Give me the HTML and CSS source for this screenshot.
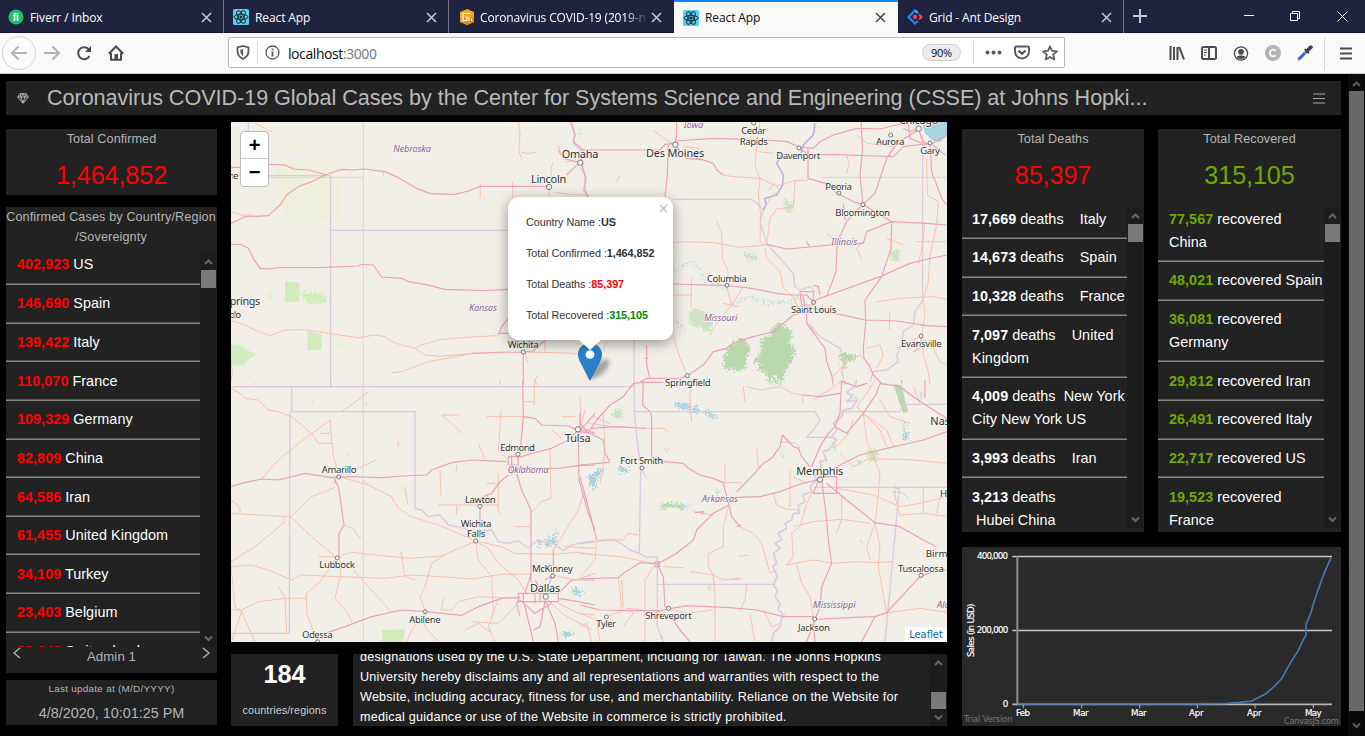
FILE: index.html
```html
<!DOCTYPE html>
<html lang="en">
<head>
<meta charset="utf-8">
<title>React App</title>
<link rel="stylesheet" href="styles.css">
</head>
<body>
<svg class="defs" width="0" height="0">
  <defs>
    <g id="react">
      <rect width="16" height="16" rx="1.5" fill="#53cdf0"/>
      <g fill="none" stroke="#20323c" stroke-width="1">
        <ellipse cx="8" cy="8" rx="7" ry="2.7"/>
        <ellipse cx="8" cy="8" rx="7" ry="2.7" transform="rotate(60 8 8)"/>
        <ellipse cx="8" cy="8" rx="7" ry="2.7" transform="rotate(120 8 8)"/>
      </g>
      <circle cx="8" cy="8" r="1.5" fill="#20323c"/>
    </g>
    <path id="x" d="M1 1L10 10M10 1L1 10" fill="none" stroke-width="1.6"/>
    <path id="up" d="M1 6L4.500 2.500L8 6" fill="none" stroke-width="2"/>
    <path id="down" d="M1 2.500L4.500 6L8 2.500" fill="none" stroke-width="2"/>
  </defs>
</svg>

<header class="tabs">
  <div class="tab first">
    <svg width="16" height="16"><circle cx="8" cy="8" r="7.500" fill="#1dbf73"/><text x="7.800" y="11.600" class="fi">fi</text></svg>
    <span class="tab-name">Fiverr / Inbox</span>
    <svg class="close" width="11" height="11"><use href="#x"/></svg>
  </div>
  <div class="tab">
    <svg width="16" height="16"><use href="#react"/></svg>
    <span class="tab-name">React App</span>
    <svg class="close" width="11" height="11"><use href="#x"/></svg>
  </div>
  <div class="tab plain">
    <svg width="16" height="16"><path d="M8 0L15 3V13L8 16L1 13V3Z" fill="#f5a623"/><path d="M1 9L8 16L15 13V8Z" fill="#e38b12"/><path d="M11.500 4.500H4V11.500H8V8H6.500M10 12V8M12.500 12V9.500" fill="none" stroke="#fff" stroke-width="1.200"/></svg>
    <span class="tab-name fade">Coronavirus COVID-19 (2019-nCoV)</span>
    <svg class="close" width="11" height="11"><use href="#x"/></svg>
  </div>
  <div class="tab active">
    <svg width="16" height="16"><use href="#react"/></svg>
    <span class="tab-name">React App</span>
    <svg class="close" width="11" height="11"><use href="#x"/></svg>
  </div>
  <div class="tab">
    <svg width="16" height="16" fill="none" stroke-width="2.200"><path d="M11 4L8 1.500L1.500 8L8 14.500L11 12" stroke="#1f86f5"/><path d="M8 1.500L11 4" stroke="#2fb4f7"/><path d="M12 5.500L14.500 8L12 10.500" stroke="#f0434f"/><circle cx="8" cy="8" r="2.200" fill="#f0434f"/></svg>
    <span class="tab-name">Grid - Ant Design</span>
    <svg class="close" width="11" height="11"><use href="#x"/></svg>
  </div>
  <svg class="plus" width="14" height="14"><path d="M7 0V14M0 7H14" stroke="#c4c4cf" stroke-width="2"/></svg>
  <div class="win">
    <svg width="10" height="10"><path d="M0 4.500H10" stroke="#fff"/></svg>
    <svg width="11" height="11" fill="none" stroke="#fff"><path d="M.5 2.500H7.500V9.500H.5ZM2.500 2.500V.5H9.500V7.500H7.500"/></svg>
    <svg width="11" height="11"><path d="M.5 .5L10.500 10.500M10.500 .5L.5 10.500" stroke="#fff"/></svg>
  </div>
</header>

<nav class="toolbar">
  <div class="back"><svg width="18" height="16"><path d="M17 8H2M8.500 1.500L2 8L8.500 14.500" class="ln dim"/></svg></div>
  <svg class="fwd" width="18" height="16"><path d="M1 8H16M9.500 1.500L16 8L9.500 14.500" class="ln dim"/></svg>
  <svg class="reload" width="16" height="16"><path d="M13 4.500A6 6 0 1 0 13.500 11" class="ln"/><path d="M15 1V7H9Z" fill="#4a4a4f"/></svg>
  <svg class="home" width="16" height="16"><path d="M.8 8.800L8 1.500L15.200 8.800" class="ln"/><path d="M3 8V14.800H13V8" class="ln"/><rect x="6.500" y="9" width="3.500" height="6" fill="#4a4a4f"/></svg>
  <div class="url">
    <svg class="shield" width="14" height="15"><path d="M7 1L12.500 2.500V6C12.500 10 10 12.500 7 14C4 12.500 1.500 10 1.500 6V2.500Z" fill="none" stroke="#5a5a5e" stroke-width="1.800"/><path d="M7 4V11C5 9.500 4.300 8 4.300 4.700Z" fill="#5a5a5e"/></svg>
    <i class="bar"></i>
    <svg class="info" width="15" height="15"><circle cx="7.500" cy="7.500" r="6.500" fill="none" stroke="#5a5a5e" stroke-width="1.300"/><path d="M7.500 6.500V11.500M7.500 3.500V5.200" stroke="#5a5a5e" stroke-width="1.800"/></svg>
    <span class="host">localhost<em>:3000</em></span>
    <span class="zoom">90%</span>
    <i class="bar"></i>
    <svg class="dots" width="17" height="5" fill="#5a5a5e"><circle cx="2.500" cy="2.500" r="2"/><circle cx="8.500" cy="2.500" r="2"/><circle cx="14.500" cy="2.500" r="2"/></svg>
    <svg class="pocket" width="16" height="15"><path d="M2 1.500H14A1 1 0 0 1 15 2.500V6.500A7 7 0 0 1 1 6.500V2.500A1 1 0 0 1 2 1.500Z" fill="none" stroke="#5a5a5e" stroke-width="1.900"/><path d="M4.500 5.500L8 8.800L11.500 5.500" class="ln"/></svg>
    <svg class="star" width="16" height="16"><path d="M8 1.300L10 5.900L15 6.300L11.200 9.600L12.400 14.500L8 11.900L3.600 14.500L4.800 9.600L1 6.300L6 5.900Z" fill="none" stroke="#5a5a5e" stroke-width="1.700" stroke-linejoin="round"/></svg>
  </div>
  <div class="tools">
    <svg width="16" height="14"><path d="M1.500 0V14M5 1V14M8.500 1V14M10.300 1L15 13.500" class="ln"/></svg>
    <svg width="16" height="14"><rect x="1" y="1" width="14" height="12" rx="1.500" class="ln"/><path d="M8 1V13" class="ln"/><path d="M3 4H6M3 6.500H6M3 9H5" stroke="#4a4a4f"/></svg>
    <svg width="16" height="15"><circle cx="8" cy="7.500" r="6.600" fill="none" stroke="#4a4a4f" stroke-width="1.300"/><circle cx="8" cy="5.800" r="2.900" fill="#4a4a4f"/><path d="M3.500 11C5 9 11 9 12.500 11C10.500 13.500 5.500 13.500 3.500 11Z" fill="#4a4a4f"/></svg>
    <svg width="16" height="16"><circle cx="8" cy="8" r="8" fill="#b4b4b4"/><path d="M10.800 6A3.300 3.300 0 1 0 10.800 10" fill="none" stroke="#f4f4f4" stroke-width="2"/></svg>
    <svg width="16" height="16"><path d="M1 15L9.500 6.500" stroke="#8a94b8" stroke-width="3.200"/><path d="M2 14L7.500 8.500" stroke="#2f5fe0" stroke-width="2"/><path d="M7 4.500L11.500 9L12.500 7.500L8.500 3.500Z" fill="#333"/><path d="M10 6L13.800 2.200" stroke="#444" stroke-width="3.800" stroke-linecap="round"/></svg>
    <i class="bar tall"></i>
    <svg class="menu" width="12" height="13"><path d="M0 1.500H12M0 6.500H12M0 11.500H12" stroke="#4a4a4f" stroke-width="2"/></svg>
  </div>
</nav>

<div class="viewport">
  <main class="page">
    <div class="title">
      <svg width="12" height="11" fill="none" stroke="#b5b5b5" stroke-width="1"><path d="M3 .7H9L11.300 4L6 10.300L.7 4ZM.7 4H11.300M3 .7L4 4L6 10L8 4L9 .7M4 4L6 1L8 4"/></svg>
      <h1>Coronavirus COVID-19 Global Cases by the Center for Systems Science and Engineering (CSSE) at Johns Hopki...</h1>
      <svg width="12" height="11"><path d="M0 1H12M0 5.500H12M0 10H12" stroke="#a8a8a8" stroke-width="1.200"/></svg>
    </div>

    <div class="columns">
      <div class="left">
        <section class="panel total">
          <h2>Total Confirmed</h2>
          <p class="num red">1,464,852</p>
        </section>
        <section class="panel cases">
          <h2>Confirmed Cases by Country/Region<br>/Sovereignty</h2>
          <div class="scroll">
            <ul class="list red-list">
              <li><b>402,923</b> US</li>
              <li><b>146,690</b> Spain</li>
              <li><b>139,422</b> Italy</li>
              <li><b>110,070</b> France</li>
              <li><b>109,329</b> Germany</li>
              <li><b>82,809</b> China</li>
              <li><b>64,586</b> Iran</li>
              <li><b>61,455</b> United Kingdom</li>
              <li><b>34,109</b> Turkey</li>
              <li><b>23,403</b> Belgium</li>
              <li><b>23,248</b> Switzerland</li>
            </ul>
            <div class="sb"><svg width="9" height="8"><use href="#up"/></svg><i></i><svg width="9" height="8"><use href="#down"/></svg></div>
          </div>
          <div class="pager">
            <svg width="8" height="12"><path d="M7 1L1 6L7 11"/></svg>
            <span>Admin 1</span>
            <svg width="8" height="12"><path d="M1 1L7 6L1 11"/></svg>
          </div>
        </section>
        <section class="panel updated">
          <small>Last update at (M/D/YYYY)</small>
          <p>4/8/2020, 10:01:25 PM</p>
        </section>
      </div>

      <div class="middle">
        <div class="map">
          <svg class="tiles" width="716" height="520" viewBox="0 0 716 520">
            <defs>
              <filter id="rough" x="-10%" y="-10%" width="120%" height="120%">
                <feTurbulence type="fractalNoise" baseFrequency=".16" numOctaves="3" seed="4" result="n"/>
                <feDisplacementMap in="SourceGraphic" in2="n" scale="36" xChannelSelector="R" yChannelSelector="G"/>
              </filter>
            </defs>
            <rect width="716" height="520" fill="#f2efe9"/>
            <!-- north-west -->
            <g transform="translate(-6 -7) scale(.33333)">
              <path class="pale" d="M150 145L320 140 350 200 340 315 190 320 165 260ZM190 80H220V100H190ZM420 460H440V485H420ZM785 255H805V275H785ZM300 660L375 680 370 700 310 695Z"/>
              <path class="park" d="M180 498L224 505 222 560 180 562ZM247 648L290 656 289 704 248 706ZM18 690L40 688 60 703 95 718 70 735 55 750 18 752Z"/>
              <path class="park rough" d="M225 532L300 536 312 562 245 566ZM132 528L142 530 140 556ZM1060 40L1070 50 1065 70 1058 60Z"/>
              <path class="border" d="M317 182V810M317 346H850M70 20V48M18 182H317M1035 20L1050 60 1045 85 1065 105 1072 140 1070 165 1085 190 1075 225 1090 245"/>
              <path class="seam" d="M415 20V810M130 187H415"/>
              <path class="orange" d="M90 25L110 35 140 50M880 20L885 55 882 110 890 130M890 112L910 116 935 110M18 290L50 300 80 300M18 617L60 630 100 650 135 662 180 645 240 644 310 655 400 668 450 660 480 665 500 680 530 690 570 700 600 720 640 724 740 716M570 700L590 690 640 675 720 667 815 662M500 773L530 770 570 755 610 740 740 716M1085 720L1030 714 895 711M960 675V710M900 711L905 735 910 745M766 205V250M863 200V250M984 145L978 160 980 200 972 215V245M990 232L1050 240 1085 240M940 780L930 795 935 810M1000 90L1005 110 1035 120M1020 140H1065M18 740L22 770 18 800M200 155L205 165M475 170V182"/>
              <path class="pink" d="M18 325L40 315 60 305 130 302 165 270 185 240 220 215 260 200 300 180 350 163 380 165 420 162 480 170 520 188 575 220 615 236 690 238 730 228 765 214H970M18 157H46M130 148L180 150 205 162 250 165 300 178M18 388H45L70 400 85 430 105 460 130 462 160 458 300 457 400 453 410 448 445 450 470 486 530 490 550 500 600 508 660 523 780 527 850 523M820 660L830 635 850 610M895 711V810M740 715L830 712 895 711 925 708 945 690 960 675M1040 22L1050 60 1045 80 1075 105 1068 140 1080 180 1080 225 1090 245M1066 143L1045 160 1025 180M1000 105L1015 130 1066 143M820 655H850"/>
            </g>
            <!-- north-east -->
            <g transform="translate(349 -7) scale(.33333)">
              <path class="lake" d="M1025 20L1035 55 1060 78 1080 80 1101 62V20Z"/>
              <path class="pale" d="M920 400L970 395 960 440 930 450ZM880 320L930 335 920 355 880 345ZM980 100L1020 110 1010 130Z"/>
              <path class="wood rough" d="M450 690L480 672 505 680 510 700 498 735 500 765 470 768 430 760 432 730ZM575 640L600 620 620 640 638 650 630 680 645 700 640 735 620 760 605 800 580 780 570 810 560 775 530 760 545 740 520 745 540 710 545 670 570 665ZM780 710L800 715 830 720 820 740 800 735 795 765 785 740Z"/>
              <path class="wood soft rough" d="M325 590L350 580 380 595 400 620 385 650 360 635 340 640 325 615ZM610 255L640 265 635 295 620 290ZM490 410L530 420 520 440 500 430ZM930 410L960 405 955 440 930 430ZM640 570L665 575 660 595 640 590Z"/>
              <path class="water rough" d="M280 465L310 455 330 440 345 455 360 460 370 490 385 500 400 505 440 515M460 575L490 550 520 550 560 565 620 560 660 548M280 615L300 622 310 650M390 610L385 640 400 650M705 20L708 40 700 60"/>
              <path class="border" d="M280 253H515L530 265 550 285 540 320 560 385 600 430 640 475 645 515 660 525 690 515 705 530M680 625L720 665 780 700 795 740 785 770 795 810M1028 60V540L1030 555 1005 590 1000 630 970 650 965 690 950 720 955 740 920 765 880 770 870 800M162 675V810"/>
              <path class="river" d="M705 25L700 60 670 90 660 125 605 120 590 145 610 180 608 210 590 240 555 250 558 270 550 285"/>
              <path class="seam" d="M725 187H1100"/>
              <path class="orange" d="M540 20L530 90 525 150 540 190 535 240 542 300 540 380 560 390M430 180L460 185 540 190 590 213L600 230 575 240 555 280M640 198L590 213M640 198L684 195M560 385L565 350 570 310 590 282 640 275 645 200M280 383L310 380 400 383 480 397 560 390M555 400L560 430 600 470 610 520 640 545M410 320L425 350 427 430 445 470 440 515 455 570M455 570L490 515M430 565L475 575M455 570L430 600 400 640 390 660M280 665L300 730 322 782M335 490L333 580M280 540H335M1040 130L1042 240 1075 260 1070 330 1050 420 1045 500 1030 550 1035 600 1025 660 1030 720 1045 770 1050 810M890 560L960 550 1060 545 1100 553M1035 325L1025 400 1015 450M800 120L808 145 800 175M1025 665L1060 700 1080 740 1100 750M1100 380H1010M950 700L1020 665M850 380L830 400 845 435M930 590L928 645M830 60L860 85 940 95M770 380L740 355M535 110L580 115M640 545L660 590M120 180L110 200M220 45L250 70 280 85M310 95L360 100M970 390L920 370M860 700L900 690 910 720 890 760M690 625L700 640M755 790L800 740 840 720 870 750M60 675L40 700M80 680L70 705M565 225L585 205"/>
              <path class="pink" d="M0 105H240L255 88 285 85 290 60V20M285 78L400 70 560 75 620 80 655 95 700 100 720 80 760 60 830 40 900 42 950 30 985 20M265 90L262 180 255 246M285 95L310 120 350 128 400 145 410 165 430 180M285 90L320 130 370 135M655 98L690 120 760 118 850 122 940 125 970 95 1010 90 1050 85M684 100V190L735 205 770 235 825 262 849 268M280 507L440 512 500 518 540 525 590 535 630 540 680 540 700 560M700 560L720 550 830 510 900 485 990 445 1030 435 1100 420M740 545L768 470 772 380 800 320 849 268 885 235 920 130 950 85 990 60 1015 45M843 20L848 100 840 180 849 268L935 320 1040 325 1100 330M935 322L933 400 905 485 855 555 857 620 850 700 852 730 870 755 880 780 910 810M680 575L740 590 857 615 950 618 1040 632 1100 635M560 388L620 402 690 396 750 390 850 385 860 350 935 320M668 540L680 600V625L720 680 735 700 740 740 755 780 760 810M680 590L640 600 580 650 520 665 470 680 440 700 400 710 370 750 322 782 300 790 200 790 180 800M1050 85L1055 170 1070 210 1085 250 1100 270M970 40L990 50 1015 42 1030 80 1050 90 1101 60M985 25L990 70 1040 90M790 265L795 315M680 380L690 396M200 690V750L210 790M660 530H700V570H665ZM700 510L715 515 720 540M1025 660L1020 700 1000 710M1095 120L1060 90M195 730H205"/>
            </g>
            <!-- south-west -->
            <g transform="translate(-6 258) scale(.33333)">
              <path class="park" d="M470 750L540 748 535 785H472ZM420 70L432 65 425 78ZM88 5L92 12 85 14Z"/>
              <path class="pale" d="M505 322L540 318 545 340 515 342Z"/>
              <path class="lake rough" d="M940 480L960 490 970 470 985 485 990 440 995 470 990 495 970 500 955 492 935 498ZM1045 620L1060 630 1072 635 1060 645 1042 640ZM1015 750L1040 758 1048 765 1015 772ZM1090 290L1110 280V330L1095 310ZM365 220H370V224H365Z"/>
              <path class="border" d="M18 20H1110M317 0V20M200 20V95M195 95H570V385L590 390 610 410 645 405 670 435 720 445 740 455 800 450 820 485 850 490 880 482 910 505 940 478 960 488 985 490 1015 512 1035 497 1060 490 1110 482M195 95L193 760H18"/>
              <path class="seam" d="M415 0V785"/>
              <path class="orange" d="M18 25L45 40 60 55 100 60 130 90 160 95 200 110 260 160 280 190H325M110 297L150 250 220 190 315 120 325 230 342 285M350 95L400 60 430 35M368 285L420 255 455 240M342 290L430 315 500 350 520 385 560 410 640 435 700 460 752 483M18 400L100 405 197 410 260 350 330 322M18 545L90 500 175 430 180 412M18 360L45 380V400M197 410L260 470 330 530M280 530H340M18 560L80 555 130 570 200 600 230 585 340 590 480 595 560 585 650 590 740 597 830 583 918 582M340 530L380 517 450 525 550 535 630 530 660 525 700 505 752 485M660 525L620 550 600 620 585 650 600 690M528 515L540 590 570 600M346 540V590L330 655 365 695 380 725M330 540L290 600 245 640V700L275 780M385 570L430 620 500 697M180 655H245M18 690L50 690 100 665 180 655 185 760M18 560L30 680 50 695 90 785M50 695L20 785M355 435L385 445 400 470 410 475M752 485L760 540 800 590 805 700 790 740 810 785M755 485L790 505 820 550 880 600 905 640M752 483L830 500 870 520 985 523 1060 517 1110 525M645 270L648 350M640 375H820M820 280V395L830 405M785 110H895M828 90L825 140 820 210 850 240M650 105H705M650 105L680 130 710 160M760 190L770 215 780 240M920 398L950 365 978 355 975 210M985 510L1005 480 1060 390 1075 340M985 585L1050 600 1110 580M600 700V740L640 785M655 655L650 690 680 690 700 665 760 650 880 655M600 700L560 750 545 785M895 65H928M928 0V75M825 0V15M1065 50L1068 140M540 320L548 370M695 255V275M695 375V405M785 310H820M520 185V200M870 440H915M880 670L850 700 820 730 740 725M720 750L760 730 800 760M160 620L180 655M320 160H285M1020 500L1110 505M1000 670L1060 700 1110 705M970 660L1010 700 1100 750M1010 110H1050M260 60L265 65M430 315L415 300M1040 600L1000 640M820 660L800 710M980 150L1010 175M500 350L505 360"/>
              <path class="pink" d="M18 320L50 310 110 297 160 300 240 280 320 293 370 290 470 293 530 288 605 285 620 270 680 248 740 240 845 245M875 235L920 220 980 205 1030 180 1060 150M893 0L895 110 885 220M895 110L930 115 950 135 1030 138 1055 148M875 262L1000 265 1060 257 1110 255M330 300L340 320 345 350 357 435 342 460V530M850 285L825 305 800 340 775 350M765 380V440M875 280L890 330 918 390V600M1060 155L1062 300 1090 400 1110 450M985 510V585L960 600M270 785L300 760 360 740 440 710 530 690 600 695 710 706 760 680 830 655 885 652M880 640H1000V665H880ZM895 640V670M930 640V670M945 640V665M918 600L925 640M918 582L900 640M930 600L960 648 980 590M1000 655L1060 665 1110 675M960 660L990 730 1000 785M895 660L925 785M960 665L945 740 925 750M885 650L875 670 885 710M1040 600H1110M850 230H880V255H850ZM860 225V285M878 285L880 300M1060 155L1085 130 1110 100M1065 130L1085 150 1110 160M885 660L930 700 980 670M1000 640L1040 600M330 290V310"/>
            </g>
            <!-- south-east -->
            <g transform="translate(349 258) scale(.33333)">
              <path class="wood" d="M940 12L965 15 975 60 985 95 970 100 955 60Z"/>
              <path class="wood rough" d="M575 0L605 0 600 14 580 10ZM245 370L270 368 310 372 310 388 275 382 245 388Z"/>
              <path class="wood soft rough" d="M100 90L130 88 125 120 98 115ZM870 205L895 210 890 245 870 250 860 225ZM830 235L850 250 840 255ZM755 185L772 195 762 215ZM605 220L615 225 610 235ZM400 330L420 335 415 345ZM380 620L395 625 390 635ZM245 205L265 210 262 217ZM600 700L615 705 610 712ZM555 30L565 35 560 42ZM1020 35L1035 40 1025 60ZM810 40L830 45 820 60Z"/>
              <path class="lake rough" d="M35 290L60 265 72 270 55 290 40 310 45 335 30 315ZM115 258L140 265 145 275 120 280ZM280 75L295 60 305 72 325 70 330 85 350 80 355 98 330 93 300 88ZM365 95L385 90 400 105 418 110 400 115ZM310 375L340 378 315 385ZM965 110L980 150 985 180 968 180 972 140ZM940 312L950 325 960 335 945 330ZM0 630L8 640 0 645ZM240 770L258 785H245Z"/>
              <path class="water" d="M950 335L970 340 985 355M455 598H475"/>
              <path class="border" d="M0 20H163M163 0V95H705L720 120 700 150 680 172H760M163 95L170 170 182 260 178 520 195 530 232 532V740L250 785M0 490L30 488 100 478 130 495 150 510 178 520M232 613H585M785 95H960L970 73H1100M700 322H1100M958 322L940 520 915 785"/>
              <path class="border wide" d="M830 0L825 20 800 35 815 50 800 65 832 60 815 85 790 90 785 110 760 130 770 150 755 170 770 180 745 210 728 215 740 240 720 245 725 262 700 275 710 300 690 320 695 335 668 345 675 365 655 375 658 400 640 400 635 420 615 430 620 445 595 460 605 480 585 490 600 505 580 520 590 550 578 560 592 590 580 615 592 630 585 650 600 670 595 690 608 700 600 740 580 760 575 785"/>
              <path class="orange" d="M50 480L45 540 20 570 0 590M50 480L130 480 145 460 175 465M447 375L430 440V500L385 520 385 560 400 585 405 650 405 785M480 440L520 460 545 490 570 580 590 570M75 205L70 250 60 310M70 100L75 200M25 130L100 140 200 145 250 145 265 155M330 25V60L335 125M530 205L535 265M435 250V305M0 520L120 530 232 552M115 593L125 690M220 560L195 600 195 785M250 560L310 563M270 690L320 700 400 690M500 615L495 660 480 690M510 700L525 785M700 330L680 370 660 440 635 460 640 530 620 555 700 540 760 550 830 545 880 548 935 545M650 555L665 610 690 650 700 710M640 440L700 425 785 418 870 430M785 345V418L770 460M580 340L590 375 620 388 650 388 660 400M770 325L880 345 960 380 1020 370 1100 350M850 100L860 180 900 280 895 345 885 428M850 100L920 150 940 200M770 200L805 160 820 120M900 60L930 110 990 130M830 80L850 100 900 150 920 200M920 698L1020 685 1100 697M550 690L575 740 600 730M0 700L50 720 60 785M80 710L145 685 190 690M145 685L160 700 130 740M125 600L130 680M500 20L540 30 600 20 640 40 668 45M668 45V70M490 20L495 65M330 575L400 585 430 600 485 595M785 0L770 15 700 60M885 0L860 40 830 80M1000 20L1020 70M940 330L960 405 1030 400 1100 410M1030 400V320M780 220L820 260 870 235 1000 240 1100 250M885 430L860 500 870 540M885 428L900 500 895 560 920 700M475 530L505 525M600 185L650 190 660 205M430 308L485 308M340 395L400 405M180 260L200 295M15 90L5 130M40 110L90 130M0 740L20 730 35 785M630 270V380M680 310L640 290M1100 700L1095 690M840 480L848 490M1070 400L1080 350"/>
              <path class="pink" d="M0 255L90 247M250 245L310 250 330 268 360 285 400 295 430 308 435 330 447 375M0 150L30 150 50 120 90 75 130 50 160 10 190 7H250M190 0L188 75 210 95 215 110V240M30 145L110 140 200 145M10 150L70 180 75 220 90 245M470 335L510 295 550 250 575 235 600 200 607 165M607 165L640 200 655 205 665 230 690 260M470 352L540 350 600 335 660 312 720 298M447 375L455 410 480 440M447 375L400 400 350 450 340 480 290 520 232 552 180 548 130 580 115 593 0 597M232 552L250 590 255 680 266 685M0 675L60 690 145 692 240 692 320 677 450 683 530 690 610 710 700 710M705 718L820 712 885 710 920 698 1020 590 1060 575 1100 570M725 300L738 400 745 480 755 550 725 620 720 680 680 785M740 310L800 360 885 428 960 440 1030 480 1070 500M695 260L720 200 745 160 765 140 780 100 785 0M720 298L770 260 840 225 920 205 1030 180 1100 155M765 140L800 160 850 100 890 40 900 10M885 710L845 785M668 45L720 50 780 40M785 5L830 20 860 10M900 10L960 20 1000 50 1060 90 1100 115M0 290L30 400 50 480M266 700L300 750 330 785M965 0V10M720 290H770V340H700ZM0 100V160M0 155L35 160M345 398L370 395 365 405M470 440L485 435M225 545H238V560H225ZM700 710L705 785M1035 0V55M225 700L240 692"/>
            </g>
            <g class="cities">
              <g transform="translate(-6 -7) scale(.33333)">
                <circle cx="1066" cy="143" r="8"/><circle cx="972" cy="216" r="8"/><circle cx="895" cy="711" r="6"/>
                <text class="st" x="505" y="111" textLength="113">Nebraska</text>
                <text class="big" x="1010" y="130" textLength="110">Omaha</text>
                <text class="big" x="918" y="203" textLength="106">Lincoln</text>
                <text class="st" x="732" y="588" textLength="84">Kansas</text>
                <text x="848" y="698" textLength="93">Wichita</text>
                <text class="big" x="14" y="569" textLength="92">prings</text>
                <text x="-2" y="610" textLength="50">Colo</text>
                <text x="10" y="193" textLength="30">ne</text>
              </g>
              <g transform="translate(349 -7) scale(.33333)">
                <circle cx="286" cy="89" r="8"/><circle cx="521" cy="24" r="6"/><circle cx="657" cy="99" r="6"/><circle cx="932" cy="60" r="6"/><circle cx="1016" cy="41" r="8"/><circle cx="1050" cy="84" r="6"/><circle cx="777" cy="234" r="6"/><circle cx="849" cy="269" r="6"/><circle cx="441" cy="511" r="6"/><circle cx="701" cy="562" r="6"/><circle cx="1023" cy="663" r="6"/><circle cx="322" cy="782" r="6"/>
                <text class="st" x="311" y="39" textLength="59">Iowa</text>
                <text class="big" x="198" y="126" textLength="175">Des Moines</text>
                <text x="484" y="58" textLength="74">Cedar</text>
                <text x="479" y="90" textLength="85">Rapids</text>
                <text x="589" y="132" textLength="132">Davenport</text>
                <text x="888" y="90" textLength="85">Aurora</text>
                <text class="big" x="957" y="28" textLength="118">Chicago</text>
                <text x="1021" y="117" textLength="59">Gary</text>
                <text x="736" y="224" textLength="80">Peoria</text>
                <text x="766" y="303" textLength="164">Bloomington</text>
                <text class="st" x="754" y="389" textLength="78">Illinois</text>
                <text x="381" y="502" textLength="119">Columbia</text>
                <text x="633" y="595" textLength="136">Saint Louis</text>
                <text class="st" x="372" y="617" textLength="100">Missouri</text>
                <text x="963" y="695" textLength="122">Evansville</text>
                <text x="255" y="813" textLength="137">Springfield</text>
              </g>
              <g transform="translate(-6 258) scale(.33333)">
                <circle cx="1059" cy="148" r="8"/><circle cx="879" cy="223" r="6"/><circle cx="341" cy="291" r="6"/><circle cx="765" cy="379" r="6"/><circle cx="752" cy="483" r="6"/><circle cx="337" cy="534" r="6"/><circle cx="983" cy="588" r="6"/><circle cx="962" cy="650" r="8"/><circle cx="600" cy="695" r="6"/><circle cx="278" cy="786" r="6"/>
                <text class="big" x="1020" y="185" textLength="77">Tulsa</text>
                <text x="826" y="213" textLength="104">Edmond</text>
                <text class="st" x="848" y="280" textLength="123">Oklahoma</text>
                <text x="290" y="280" textLength="105">Amarillo</text>
                <text x="720" y="369" textLength="92">Lawton</text>
                <text x="707" y="440" textLength="92">Wichita</text>
                <text x="726" y="472" textLength="55">Falls</text>
                <text x="283" y="565" textLength="107">Lubbock</text>
                <text x="921" y="577" textLength="123">McKinney</text>
                <text class="big" x="915" y="635" textLength="91">Dallas</text>
                <text x="553" y="728" textLength="94">Abilene</text>
                <text x="231" y="773" textLength="92">Odessa</text>
              </g>
              <g transform="translate(349 258) scale(.33333)">
                <circle cx="186" cy="264" r="6"/><circle cx="720" cy="299" r="8"/><circle cx="1023" cy="586" r="6"/><circle cx="266" cy="685" r="6"/><circle cx="79" cy="711" r="6"/><circle cx="704" cy="717" r="6"/>
                <text x="121" y="253" textLength="129">Fort Smith</text>
                <text class="big" x="649" y="286" textLength="141">Memphis</text>
                <text class="st" x="366" y="365" textLength="108">Arkansas</text>
                <text class="big" x="1051" y="134">Nashville</text>
                <text x="1080" y="352">Huntsville</text>
                <text x="1037" y="530">Birmingham</text>
                <text x="954" y="576" textLength="138">Tuscaloosa</text>
                <text class="st" x="699" y="684" textLength="128">Mississippi</text>
                <text class="st" x="1071" y="683">Alabama</text>
                <text x="196" y="717" textLength="139">Shreveport</text>
                <text x="49" y="742" textLength="59">Tyler</text>
                <text x="654" y="753" textLength="96">Jackson</text>
              </g>
            </g>
          </svg>
          <div class="zoomer"><span>+</span><span>−</span></div>
          <svg class="shadow" width="34" height="34"><ellipse cx="14" cy="20" rx="13" ry="5.500" transform="rotate(-42 14 20)"/></svg>
          <svg class="pin" width="24" height="38" viewBox="0 0 25 41" preserveAspectRatio="none"><path d="M12.500 .5C5.500 .5 .5 5.800 .5 12.300C.5 17 3 21 5 25L12.500 40L20 25C22 21 24.500 17 24.500 12.300C24.500 5.800 19.500 .5 12.500 .5Z" fill="#2a81cb" stroke="#2a6fab"/><circle cx="12.500" cy="12.500" r="4.600" fill="#fff"/></svg>
          <div class="popup">
            <svg class="x" width="9" height="9" viewBox="0 0 11 11"><use href="#x"/></svg>
            <p>Country Name :<b>US</b></p>
            <p>Total Confirmed :<b>1,464,852</b></p>
            <p>Total Deaths :<b class="red">85,397</b></p>
            <p>Total Recovered :<b class="grn">315,105</b></p>
          </div>
          <span class="leaflet">Leaflet</span>
        </div>
        <div class="below">
          <section class="panel count"><b>184</b><span>countries/regions</span></section>
          <section class="panel notice">
            <p>designations used by the U.S. State Department, including for Taiwan. The Johns Hopkins<br>University hereby disclaims any and all representations and warranties with respect to the<br>Website, including accuracy, fitness for use, and merchantability. Reliance on the Website for<br>medical guidance or use of the Website in commerce is strictly prohibited.</p>
            <div class="sb end"><svg width="9" height="8"><use href="#up"/></svg><i></i><svg width="9" height="8"><use href="#down"/></svg></div>
          </section>
        </div>
      </div>

      <div class="right">
        <div class="pair">
          <section class="panel deaths">
            <h2>Total Deaths</h2>
            <p class="num red">85,397</p>
            <div class="scroll">
              <ul class="list">
                <li><b>17,669</b> deaths&nbsp;&nbsp;&nbsp; Italy</li>
                <li><b>14,673</b> deaths&nbsp;&nbsp;&nbsp; Spain</li>
                <li><b>10,328</b> deaths&nbsp;&nbsp;&nbsp; France</li>
                <li><b>7,097</b> deaths&nbsp;&nbsp;&nbsp; United<br>Kingdom</li>
                <li><b>4,009</b> deaths&nbsp; New York<br>City New York US</li>
                <li><b>3,993</b> deaths&nbsp;&nbsp;&nbsp; Iran</li>
                <li><b>3,213</b> deaths<br>&nbsp;Hubei China</li>
              </ul>
              <div class="sb"><svg width="9" height="8"><use href="#up"/></svg><i></i><svg width="9" height="8"><use href="#down"/></svg></div>
            </div>
          </section>
          <section class="panel recovered">
            <h2>Total Recovered</h2>
            <p class="num lime">315,105</p>
            <div class="scroll">
              <ul class="list lime-list">
                <li><b>77,567</b> recovered<br>China</li>
                <li><b>48,021</b> recovered Spain</li>
                <li><b>36,081</b> recovered<br>Germany</li>
                <li><b>29,812</b> recovered Iran</li>
                <li><b>26,491</b> recovered Italy</li>
                <li><b>22,717</b> recovered US</li>
                <li><b>19,523</b> recovered<br>France</li>
              </ul>
              <div class="sb"><svg width="9" height="8"><use href="#up"/></svg><i></i><svg width="9" height="8"><use href="#down"/></svg></div>
            </div>
          </section>
        </div>
        <svg class="chart" width="379" height="179">
          <g transform="translate(-12 -12) scale(.33333)">
            <path d="M187 64.500H1146M187 286.500H1146" stroke="#c8c8c8" stroke-width="4"/>
            <path d="M202 64V510" stroke="#8c8c8c" stroke-width="6"/>
            <path d="M187 508H1146" stroke="#b4b4b4" stroke-width="5"/>
            <path d="M220 508V520M395 508V520M569 508V520M742 508V520M915 508V520M1090 508V520" stroke="#b4b4b4" stroke-width="3"/>
            <path d="M202 506.500H740L830 505 870 502 905 498 945 478 972 455 995 431 1020 386 1045 346 1057 320 1068 300V268L1082 236 1092 200 1105 163 1122 116 1143 68" fill="none" stroke="#4a76ae" stroke-width="5" stroke-linejoin="round"/>
            <g class="axis">
              <text x="81" y="72" textLength="93">400,000</text>
              <text x="80" y="294" textLength="95">200,000</text>
              <text x="158" y="516">0</text>
              <text x="198" y="542" textLength="42">Feb</text>
              <text x="369" y="542" textLength="47">Mar</text>
              <text x="543" y="542" textLength="47">Mar</text>
              <text x="717" y="542" textLength="44">Apr</text>
              <text x="891" y="542" textLength="44">Apr</text>
              <text x="1065" y="542" textLength="50">May</text>
              <text transform="translate(71 366) rotate(-90)" textLength="160">Sales (in USD)</text>
            </g>
            <text class="mark" x="42" y="560" textLength="145">Trial Version</text>
            <text class="mark" x="1002" y="566" textLength="165">CanvasJS.com</text>
          </g>
        </svg>
      </div>
    </div>
  </main>
  <div class="page-sb"><svg width="9" height="8"><use href="#up"/></svg><i></i><svg width="9" height="8"><use href="#down"/></svg></div>
</div>
</body>
</html>
```
FILE: styles.css
```css
* { box-sizing: border-box; }
body { margin: 0; width: 1365px; height: 736px; overflow: hidden; display: flex; flex-direction: column; background: #000; color: #fff; font-family: "Liberation Sans", Arial, sans-serif; }
h1, h2, p, ul { margin: 0; padding: 0; font-weight: normal; }
svg { display: block; flex: none; }
.defs { position: absolute; }
.bar { width: 1px; height: 22px; background: #d7d7db; flex: none; }

/* browser tabs */
.tabs { height: 33px; flex: none; display: flex; align-items: center; background: #202340; border-bottom: 1px solid #12142b; font-family: "Open Sans", "Noto Sans", sans-serif; font-size: 12px; }
.tab { width: 225px; height: 33px; flex: none; display: flex; align-items: center; gap: 6px; padding: 2px 11px 0 9px; border-right: 1px solid #6d6f85; letter-spacing: -.1px; }
.tab.first { width: 224px; padding-left: 8px; padding-right: 12px; }
.tab.first .close { margin-right: -1px; }
.tab.plain { border-right-color: transparent; padding-left: 10px; }
.tab.plain .tab-name { margin-left: -1px; letter-spacing: -.16px; }
.tab.active { width: 224px; margin-bottom: -1px; background: #f9f9fa; color: #0c0c0d; border-right: 0; border-top: 2px solid #0a84ff; padding: 0 12px 0 9px; }
.tab-name { flex: 1; min-width: 0; white-space: nowrap; overflow: hidden; }
.tab-name.fade { -webkit-mask-image: linear-gradient(to right, #000 145px, transparent 168px); mask-image: linear-gradient(to right, #000 145px, transparent 168px); }
.close { stroke: #c4c4cf; }
.active .close { stroke: #4a4a4f; }
.fi { font: bold 10px "Liberation Sans", sans-serif; fill: #fff; text-anchor: middle; }
.tab:nth-child(5) { width: 226px; letter-spacing: -.15px; }
.plus { margin-left: 9px; }
.win { margin-left: auto; display: flex; align-items: center; gap: 36px; padding-right: 17px; }

/* toolbar */
.toolbar { height: 41px; flex: none; display: flex; align-items: center; background: #f9f9fa; border-bottom: 1px solid #ccc; color: #0c0c0d; font-family: "Open Sans", "Noto Sans", sans-serif; }
.ln { fill: none; stroke: #4a4a4f; stroke-width: 2; }
.dim { stroke: #b4b4b6; }
.back { width: 34px; height: 34px; margin-left: 2px; border: 1px solid #d3d3d5; border-radius: 50%; display: flex; align-items: center; justify-content: center; background: #fbfbfb; }
.fwd { margin-left: 7px; }
.reload { margin-left: 15px; }
.home { margin-left: 16px; }
.url { width: 837px; height: 31px; margin-left: 104px; display: flex; align-items: center; background: #fff; border: 1px solid #b9b9bd; border-radius: 2px; margin-top: -1px; }
.shield { margin: 0 7px 0 7px; }
.info { margin: 0 8px 0 7px; }
.host { font-size: 14px; letter-spacing: -.42px; margin-top: 2px; flex: 1; }
.host em { font-style: normal; color: #77777b; }
.zoom { width: 39px; height: 17px; margin-right: 12px; border: 1px solid #cfcfd2; border-radius: 9px; background: #ededf0; font-size: 11px; line-height: 15px; text-align: center; letter-spacing: -.3px; }
.dots { margin: 0 12px 0 11px; }
.pocket { margin-right: 12px; }
.star { margin-right: 6px; }
.tools { flex: 1; display: flex; align-items: center; gap: 16px; padding-left: 104px; }
.tall { height: 33px; margin-left: -5px; }
.menu { margin-left: -1px; }

/* page */
.viewport { flex: 1; min-height: 0; display: flex; }
.page { flex: 1; min-width: 0; padding: 7px 7px 0 6px; }
.title { height: 34px; display: flex; align-items: center; background: #222; padding: 0 16px 0 11px; }
.title h1 { flex: 1; margin-left: 18px; font-size: 21.6px; letter-spacing: -.046px; color: #b9b9b9; white-space: nowrap; }
.columns { display: flex; }
.panel { background: #222; }
.left { width: 211px; margin: 14px 14px 0 0; display: flex; flex-direction: column; gap: 12px; }
.middle { width: 716px; margin: 7px 15px 0 0; }
.right { width: 379px; margin-top: 14px; display: flex; flex-direction: column; gap: 15px; }
h2 { font-size: 12.6px; line-height: 20px; letter-spacing: .1px; text-align: center; color: #b5b5b5; white-space: nowrap; }
.num { font-size: 25.2px; line-height: 36px; height: 38px; margin-top: 8px; text-align: center; letter-spacing: -.1px; }
.red, .red-list b { color: #f00; }
.lime, .lime-list b { color: #70a800; }
.total { height: 66px; }
.cases { height: 466px; display: flex; flex-direction: column; }
.cases h2 { letter-spacing: .14px; height: 46px; margin-left: -1px; }
.cases .scroll { flex: none; height: 394px; }
.scroll { display: flex; overflow: hidden; padding-right: 1px; }
.list { flex: 1; min-width: 0; list-style: none; font-size: 14.4px; line-height: 23.04px; white-space: nowrap; letter-spacing: .03px; }
.list li { padding: 7.400px 0 7.200px 11px; border-bottom: 1px solid #868686; box-shadow: inset 0 -1px #555; }
.list li:first-child { padding-top: .8px; }
.red-list li:first-child { padding-top: 0; padding-bottom: 8px; }
.sb { width: 16px; flex: none; display: flex; flex-direction: column; align-items: center; justify-content: space-between; background: #1d1d1e; padding: 5px 0; stroke: #66666a; }
.sb i { width: 15px; height: 18px; background: #7a7a7a; margin: 4px 0 auto; }
.pager { flex: 1; display: flex; justify-content: space-between; padding: 0 7px; font-size: 13.2px; letter-spacing: .1px; line-height: 19px; color: #b5b5b5; }
.pager svg { fill: none; stroke: #b5b5b5; stroke-width: 1.300; }
.updated { height: 45px; margin-top: -5px; text-align: center; color: #b5b5b5; }
.updated small { display: block; font-size: 9.9px; line-height: 17px; letter-spacing: .28px; }
.updated p { font-size: 14.4px; line-height: 32px; }

.pair { display: flex; gap: 14px; }
.deaths, .recovered { height: 403px; width: 182px; overflow: hidden; }
.recovered { width: 183px; }
.pair .num { margin-top: 8px; height: 50px; }
.pair .scroll { height: 321px; }
.deaths .list li { padding-left: 10px; }
.chart { background: #2a2a2a; }
.axis text { font: 26px "DejaVu Sans", sans-serif; fill: #fff; stroke: #fff; stroke-width: .5px; }
.mark { font: 25px "DejaVu Sans", sans-serif; fill: #777; }

/* map */
.map { position: relative; height: 520px; overflow: hidden; }
.tiles path { fill: none; stroke-linejoin: round; }
.tiles .pink { stroke: #eea2b8; stroke-width: 3.600; }
.tiles .orange { stroke: #fabfae; stroke-width: 2.900; }
.tiles .border { stroke: #dccae0; stroke-width: 4; }
.tiles .wide { stroke-width: 5; }
.tiles .river { stroke: #b9b6dc; stroke-width: 5; }
.tiles .seam { stroke: #d4d6da; stroke-width: 3; }
.tiles .water { stroke: #b7d7e2; stroke-width: 3; }
.tiles .lake { fill: #aad3df; }
.tiles .wood { fill: #b9d8ae; }
.tiles .soft { fill: #cfe2c3; }
.tiles .park { fill: #d3ecbd; }
.tiles .pale { fill: #eff0dc; }
.rough { filter: url(#rough); }
.cities circle { fill: #f8f8f5; stroke: #777; stroke-width: 3; }
.cities text { font: 29px "Noto Sans", sans-serif; fill: #333; stroke: #f6f4ef; stroke-width: 5px; paint-order: stroke; }
.cities .big { font-size: 33px; }
.cities .st { font-style: italic; font-size: 28px; fill: #8d6198; }
.zoomer { position: absolute; left: 9px; top: 9px; width: 29px; border: 1px solid #bbb; border-radius: 4px; background: #fff; background-clip: padding-box; color: #000; font: bold 20px/27px "Liberation Sans", sans-serif; text-align: center; }
.zoomer span { display: block; height: 27px; }
.zoomer span:first-child { border-bottom: 1px solid #ccc; }
.popup { position: absolute; left: 277px; top: 75px; width: 165px; height: 143px; padding: 10px 0 0 18px; background: #fff; border-radius: 11px; box-shadow: 0 3px 13px rgba(0,0,0,.4); color: #333; font-size: 10.8px; line-height: 31px; letter-spacing: -.05px; white-space: nowrap; }
.popup::after { content: ""; position: absolute; left: 71px; top: 143px; border: 11px solid transparent; border-top: 10px solid #fff; border-bottom: 0; }
.grn { color: #008a00; }
.popup .x { position: absolute; right: 5px; top: 7px; stroke: #c3c3c3; stroke-width: 2; }
.pin { position: absolute; left: 347px; top: 221px; }
.shadow { position: absolute; left: 354px; top: 227px; fill: rgba(0,0,0,.32); filter: blur(2px); }
.leaflet { position: absolute; right: 0; bottom: 0; width: 42px; height: 15px; background: rgba(255,255,255,.7); color: #0078a8; font: 9.9px/15px "DejaVu Sans", sans-serif; text-align: center; }
.below { display: flex; justify-content: space-between; margin-top: 12px; height: 72px; }
.count { width: 107px; display: flex; flex-direction: column; align-items: center; }
.count b { font-size: 25.2px; line-height: 40px; }
.count span { font-size: 10.8px; letter-spacing: .1px; line-height: 32px; color: #ccc; }
.notice { width: 594px; display: flex; overflow: hidden; padding: 0 1px 0 7px; }
.notice p { flex: 1; margin-top: -7px; font-size: 12.6px; line-height: 20px; letter-spacing: .225px; white-space: nowrap; }
.sb.end i { margin: auto 0 4px; height: 17px; }

.page-sb { width: 17px; display: flex; flex-direction: column; align-items: center; padding: 6px 0 7px; stroke: #5c5c5e; background: #0a0a0b; }
.page-sb i { flex: 1; width: 15px; margin: 3px 0 10px; background: #686868; }
```
